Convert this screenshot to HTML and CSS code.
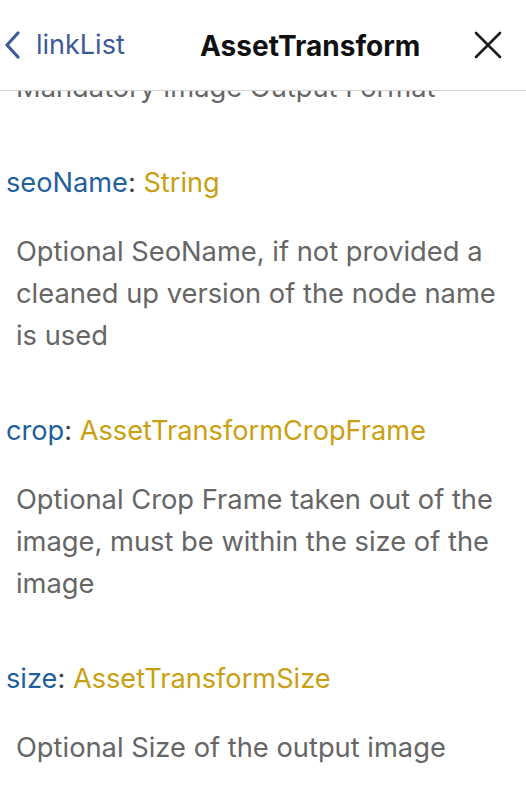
FILE: index.html
```html
<!DOCTYPE html>
<html>
<head>
<meta charset="utf-8">
<link rel="stylesheet" href="styles.css">
</head>
<body>
<div class="page">
  <header class="header">
    <a class="back">
      <svg class="chev" width="18" height="28" viewBox="0 0 18 28"><path d="M14 2 L3 14 L14 26" fill="none" stroke="#3d5a98" stroke-width="3.2" stroke-linecap="round" stroke-linejoin="round"/></svg>
      <span class="back-text">linkList</span>
    </a>
    <div class="title">AssetTransform</div>
    <svg class="close" width="28" height="28" viewBox="0 0 28 28"><path d="M2 2 L26 26 M26 2 L2 26" fill="none" stroke="#1c1c1c" stroke-width="2.6" stroke-linecap="round"/></svg>
  </header>
  <main class="content">
    <p class="desc first">Mandatory Image Output Format</p>
    <div class="field">
      <div class="label"><span class="name">seoName</span>: <span class="type">String</span></div>
      <p class="desc">Optional SeoName, if not provided a cleaned up version of the node name is used</p>
    </div>
    <div class="field">
      <div class="label"><span class="name">crop</span>: <span class="type">AssetTransformCropFrame</span></div>
      <p class="desc">Optional Crop Frame taken out of the image, must be within the size of the image</p>
    </div>
    <div class="field">
      <div class="label"><span class="name">size</span>: <span class="type">AssetTransformSize</span></div>
      <p class="desc">Optional Size of the output image</p>
    </div>
  </main>
</div>
</body>
</html>
```
FILE: styles.css
```css
html, body {
  margin: 0;
  padding: 0;
  background: #fff;
}
body {
  font-family: Inter, "Liberation Sans", sans-serif;
  width: 526px;
  height: 808px;
  overflow: hidden;
}
.page {
  display: flex;
  flex-direction: column;
  height: 808px;
}
.header {
  height: 90px;
  flex: none;
  border-bottom: 1px solid #d3d3d3;
  display: flex;
  align-items: center;
  position: relative;
  z-index: 1;
  background: #fff;
}
.back {
  display: flex;
  align-items: center;
  gap: 14px;
  padding-left: 4px;
  width: 180px;
  color: #3d5a98;
}
.chev { flex: none; }
.back-text {
  font-size: 27px;
  line-height: 32px;
}
.title {
  flex: 1;
  font-size: 28px;
  line-height: 34px;
  font-weight: 700;
  color: #111;
  padding-left: 16px;
  padding-top: 2px;
}
.close {
  flex: none;
  margin-right: 24px;
}
.content {
  flex: 1;
  overflow: hidden;
}
.desc {
  margin: 30px 0 0 0;
  padding: 0 24px 0 16px;
  font-size: 27.3px;
  line-height: 42px;
  color: #666666;
}
.desc.first {
  margin-top: -24px;
}
.field {
  margin-top: 56px;
}
.label {
  padding-left: 6px;
  font-size: 27.2px;
  line-height: 36px;
  color: #444;
}
.name { color: #1f5f9c; }
.type { color: #c9a012; }
```
